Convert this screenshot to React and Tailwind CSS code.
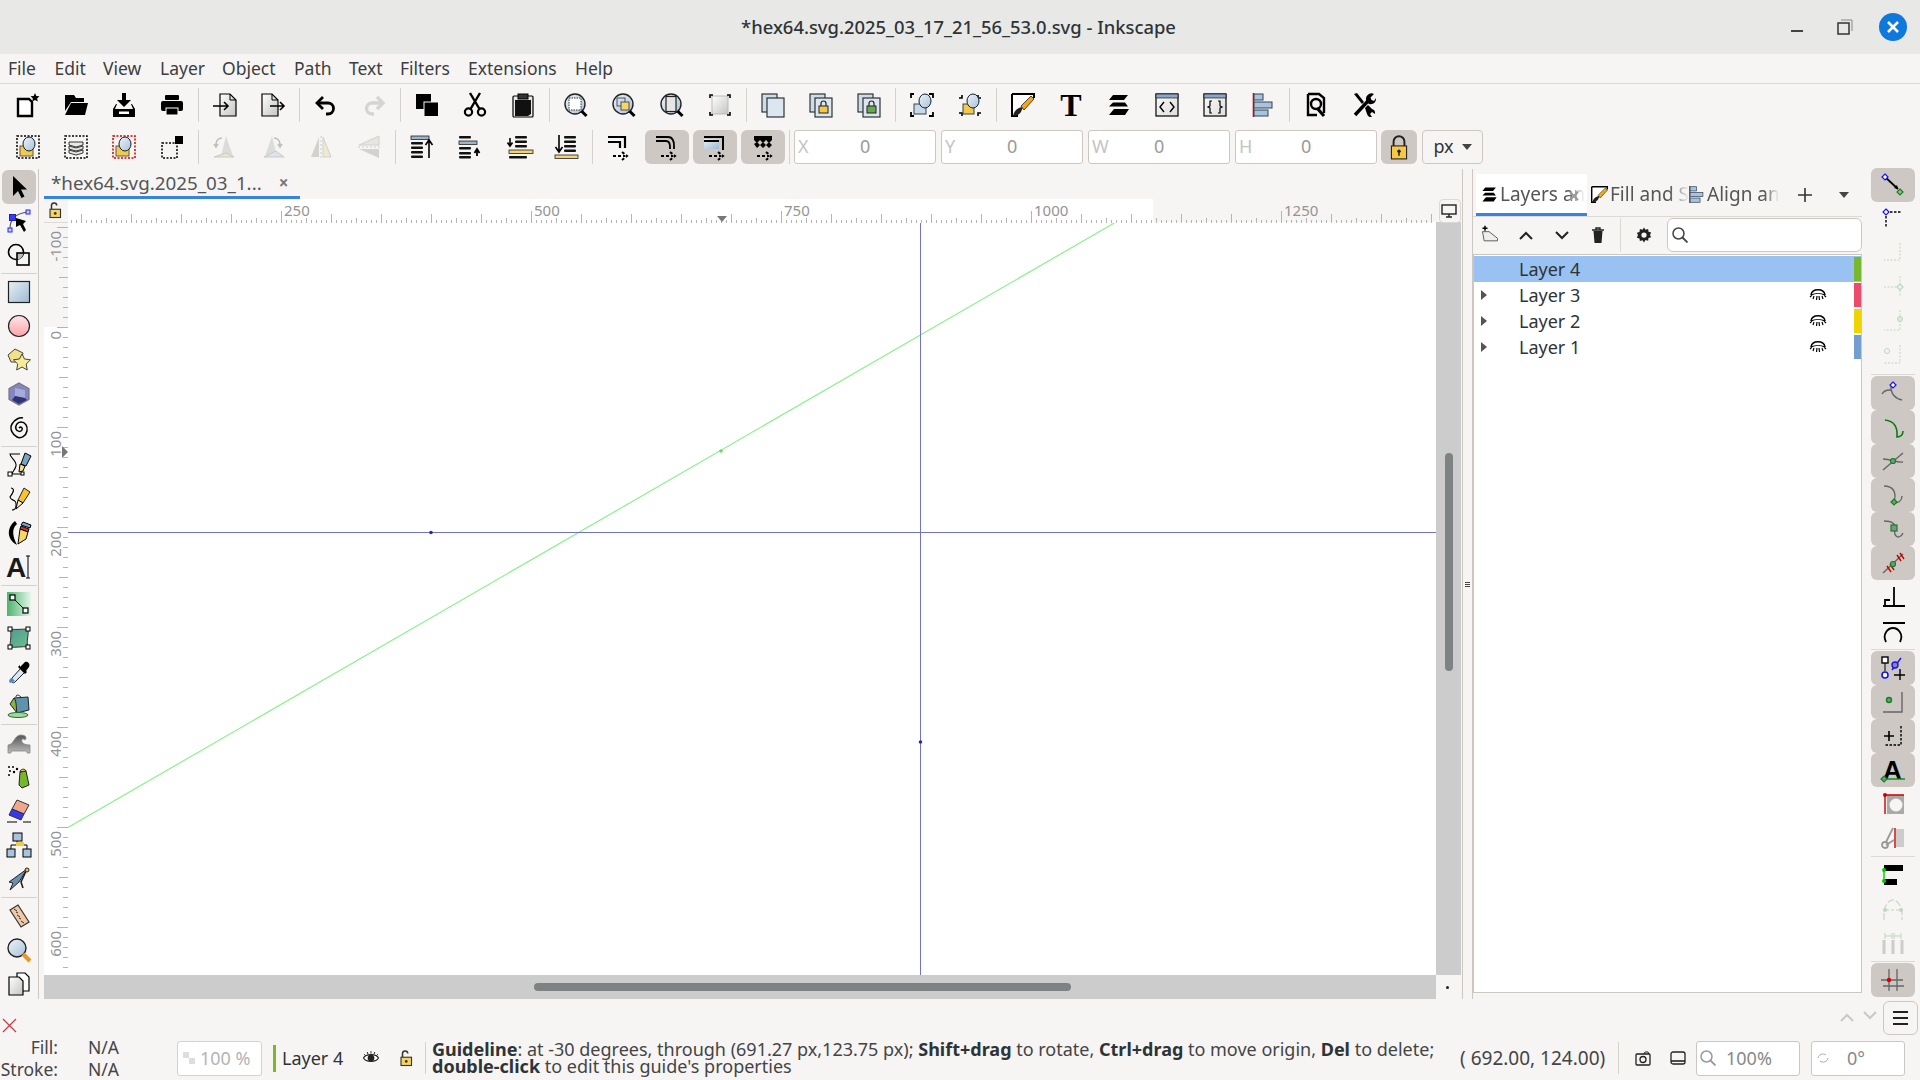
import React from "react";

const S = ({ children, size = 24 }) => (
  <svg width={size} height={size} viewBox="0 0 24 24" fill="none" className="shrink-0 overflow-visible">
    {children}
  </svg>
);

const k = "#000";
const Dash = (p) => <rect fill="none" stroke="#000" strokeWidth="1.5" strokeDasharray="2 1.5" {...p} />;
const Mag = ({ children, handle = "#000" }) => (
  <S>
    <circle cx="11" cy="11" r="10" fill="url(#gGlass)" stroke="#222" strokeWidth="1.4" />
    {children}
    <path d="M17.5 18l5 5" stroke={handle} strokeWidth="3" />
  </S>
);
const Glass = ({ x = 13, y = 10, r = 6 }) => <ellipse cx={x} cy={y} rx={r} ry={r + 1} fill="url(#gGlass)" stroke="#123" strokeWidth="1" />;
const Bars = ({ ys, x = 1, w = 15, blue, yellow }) => (
  <>
    {ys.map((y) => <rect key={y} x={x} y={y} width={w} height="2.6" rx="1" fill="#111" />)}
    {blue !== undefined && <rect x={x} y={blue} width={w + 6} height="3.4" fill="#9db4cc" stroke="#222" strokeWidth=".8" />}
    {yellow !== undefined && <rect x={x} y={yellow} width={w + 6} height="3.4" fill="#f3d27a" stroke="#222" strokeWidth=".8" />}
  </>
);

const New = () => <S><path d="M2 6h11l3 3v14H2z" fill="#fff" stroke={k} strokeWidth="2.4" /><path d="M19 0l1.300 3 3.200.3-2.400 2.100.7 3.200-2.800-1.700-2.800 1.700.7-3.200-2.400-2.100 3.200-.3z" fill={k} /></S>;
const Open = () => <S><path d="M1 2h9l2 3h8v4H7l-6 9z" fill={k} /><path d="M7 10h17l-3 12H1z" fill={k} /></S>;
const Save = () => <S><path d="M10 0h4v7h5l-7 7-7-7h5z" fill={k} /><path d="M4 11l-3 5v8h22v-8l-3-5h-1l2 5H3l2-5z" fill={k} /><rect x="7" y="18.500" width="10" height="2.500" fill="#fff" /></S>;
const Print = () => <S><rect x="5" y="2" width="14" height="5" rx="1" fill={k} /><rect x="1" y="8" width="22" height="10" rx="2" fill={k} /><rect x="6" y="15" width="12" height="7" fill={k} stroke="#fff" strokeWidth="1" /></S>;
const Import = () => <S><path d="M7 1h10l6 6v16H7z" fill="url(#gGray)" stroke={k} strokeWidth="1.200" /><path d="M17 1v6h6" stroke={k} /><path d="M0 13h15M11 9l4 4-4 4" stroke={k} strokeWidth="1.600" /></S>;
const Export = () => <S><path d="M1 1h10l6 6v16H1z" fill="url(#gGray)" stroke={k} strokeWidth="1.200" /><path d="M11 1v6h6" stroke={k} /><path d="M9 13h14M19 9l4 4-4 4" stroke={k} strokeWidth="1.600" /></S>;
const Undo = () => <S><path d="M9 4l-6 6 6 6" stroke={k} strokeWidth="2.800" /><path d="M3 10h11a5.500 5.500 0 0 1 0 11h-2" stroke={k} strokeWidth="2.800" /></S>;
const Redo = () => <S><path d="M15 4l6 6-6 6" stroke="#d4d4d2" strokeWidth="3.400" /><path d="M21 10H10a5.500 5.500 0 0 0 0 11h2" stroke="#d4d4d2" strokeWidth="3.400" /></S>;
const Copy = () => <S><rect x="1" y="1" width="15" height="15" fill={k} /><rect x="9" y="9" width="14.500" height="14.500" fill={k} stroke="#f6f5f4" strokeWidth="1" /></S>;
const Cut = () => <S><circle cx="5.500" cy="19" r="3.600" stroke={k} strokeWidth="2.200" /><circle cx="18.500" cy="19" r="3.600" stroke={k} strokeWidth="2.200" /><path d="M7.500 16L17 0M16.500 16L7 0" stroke={k} strokeWidth="2.400" /></S>;
const Paste = () => <S><rect x="2" y="3" width="20" height="21" rx="1" fill="#e8e8e6" stroke={k} strokeWidth="1.200" /><path d="M4 7h16v14l-3 2H4z" fill="#111" /><rect x="7" y="1" width="10" height="5" fill="#333" stroke={k} /></S>;
const ZoomSel = () => <Mag><rect x="5" y="5" width="12" height="12" fill="#fff" stroke="#333" strokeDasharray="1.500 1" /></Mag>;
const ZoomDraw = () => <Mag><rect x="5" y="5" width="8" height="8" fill="#cfdceb" stroke="#333" strokeWidth=".8" /><rect x="9" y="9" width="8" height="8" fill="#f5d46c" stroke="#333" strokeWidth=".8" /></Mag>;
const ZoomPage = () => <Mag><rect x="6" y="3.500" width="10" height="15" fill="#e6e6e4" stroke="#222" strokeWidth="1.200" /></Mag>;
const ZoomFit = () => <S><rect x="4" y="3" width="16" height="18" fill="url(#gGray)" stroke="#bbb" /><path d="M2 5V2h3M19 2h3v3M2 19v3h3M19 22h3v-3" stroke={k} strokeWidth="1.600" /></S>;
const Pages = ({ lock }) => <S><rect x="1" y="1" width="15" height="18" fill="#cfdbe8" stroke="#2e3436" strokeWidth="1.200" /><rect x="6" y="5" width="17" height="19" fill="#dce6f0" stroke="#2e3436" strokeWidth="1.200" />{lock && <><path d="M12 13v-2.500a2.500 2.500 0 0 1 5 0V13" stroke="#222" strokeWidth="1.200" /><rect x="10" y="13" width="9" height="7" fill={lock} stroke="#222" /></>}</S>;
const Group = () => <S><path d="M1 5V1h3M19 1h4v4M1 19v4h3M19 23h4v-4" stroke={k} strokeWidth="1.800" /><rect x="4" y="11" width="12" height="10" fill="#c9d8e8" stroke="#345" /><Glass x={15} y={8} r={6} /></S>;
const Ungroup = () => <S><path d="M1 5h3V2M20 2v3h3M1 20h3v3M20 23v-3h3" stroke={k} strokeWidth="1.600" /><rect x="5" y="11" width="11" height="10" fill="#f3c949" stroke="#345" /><Glass x={15} y={8} r={6} /></S>;
const FillIc = () => <S><FillInner /></S>;
const LayersIc = () => <S><LayersInner /></S>;
const Win = ({ children }) => <S><rect x="1" y="1" width="22" height="22" fill="url(#gGray2)" stroke={k} strokeWidth="1.200" /><rect x="1" y="1" width="22" height="4" fill="#88a6c6" stroke={k} strokeWidth=".6" />{children}</S>;
const Xml = () => <Win><path d="M9 9l-4 5 4 5M15 9l4 5-4 5" stroke={k} strokeWidth="1.400" /></Win>;
const Css = () => <Win><path d="M9 8H7v5l-2 1 2 1v5h2M15 8h2v5l2 1-2 1v5h-2" stroke={k} strokeWidth="1.200" /></Win>;
const AlignIc = () => <S><AlignInner /></S>;
const Prefs = () => <S><path d="M4 1h11l5 4v15" stroke={k} strokeWidth="2.400" /><path d="M4 1v21h9" stroke={k} strokeWidth="2.400" /><circle cx="12" cy="11" r="5" stroke={k} strokeWidth="2.400" /><path d="M13 15l7 8" stroke={k} strokeWidth="3.200" /></S>;
const Tools = () => <S><path d="M3 22L16 8" stroke={k} strokeWidth="3.400" /><path d="M15 9a5.500 5.500 0 0 1 7-8l-3.500 3.500 1 2.500 2.500 1L24 5a5.500 5.500 0 0 1-7 6z" fill={k} /><path d="M2 1l3-1 7 9-2 2z" fill={k} /><path d="M13 15l3-3 4 4a4.500 4.500 0 0 1 3 5l-3-2-2 2 2 3a4.500 4.500 0 0 1-5-3z" fill={k} /></S>;

const SelAll = () => <S><Dash x="1" y="1" width="22" height="22" /><rect x="4" y="11" width="13" height="10" fill="#f3c949" stroke="#654" /><Glass x={13} y={9} r={6} /></S>;
const SelLayers = () => <S><Dash x="1" y="1" width="22" height="22" /><path d="M5 7h14v3L12 12 5 10zM5 11l7 2 7-2v3l-7 2-7-2zM5 15l7 2 7-2v3l-7 2-7-2z" fill="#e8e8e6" stroke="#222" strokeWidth=".9" /></S>;
const Deselect = () => <S><Dash x="1" y="1" width="22" height="22" stroke="#d00000" /><rect x="4" y="11" width="13" height="10" fill="#f3c949" stroke="#654" /><Glass x={13} y={9} r={6} /></S>;
const SelSame = () => <S><Dash x="2" y="8" width="15" height="15" /><rect x="15" y="1" width="8" height="8" fill={k} /></S>;
const RotL = () => <S><path d="M13 1l7 20H8z" fill="#dcdcd8" /><path d="M1 22h20l-8-4z" fill="#eee6cc" stroke="#c9c9c6" /><path d="M9 3a6 6 0 0 0-6 6v3M1 9l2 3 2-3" stroke="#c0c0bd" strokeWidth="1.600" /></S>;
const RotR = () => <S><path d="M11 1L4 21h12z" fill="#dcdcd8" /><path d="M3 22h20l-8-6z" fill="#dde4ee" stroke="#c9c9c6" /><path d="M13 3a6 6 0 0 1 6 6v3M17 9l2 3 2-3" stroke="#c0c0bd" strokeWidth="1.600" /></S>;
const FlipH = () => <S><path d="M10 2v20H2z" fill="#d2d2ce" /><path d="M14 2v20h8z" fill="#f2ead0" stroke="#d0d0cc" /><path d="M12 1v22" stroke="#ccc" strokeDasharray="2 2" /></S>;
const FlipV = () => <S><path d="M22 1v9H2z" fill="#e5e5e2" stroke="#d0d0cc" /><path d="M22 23v-9H2z" fill="#d2d2ce" /><path d="M1 12h22" stroke="#ccc" strokeDasharray="2 2" /></S>;
const RaiseTop = () => <S><Bars ys={[7, 11.500, 16, 20.500]} w={12} blue={1} /><path d="M19 23V6M15.500 10L19 5l3.500 5" stroke={k} strokeWidth="1.600" /></S>;
const Raise = () => <S><Bars ys={[1, 12, 17, 21]} w={12} blue={6} /><path d="M19 21v-6M16.500 18l2.500-4 2.500 4" stroke={k} strokeWidth="1.800" /></S>;
const Lower = () => <S><Bars ys={[1, 5.500, 10]} x={9} w={12} /><Bars ys={[21]} x={3} w={18} yellow={15} /><path d="M4 3v7M1.500 7.500L4 11l2.500-3.500" stroke={k} strokeWidth="1.600" /></S>;
const LowerB = () => <S><Bars ys={[1, 5.500, 10, 14.500]} x={10} w={12} /><Bars ys={[]} x={1} w={17} yellow={20} /><path d="M5 0v16M1.500 12L5 17l3.500-5" stroke={k} strokeWidth="1.600" /></S>;
const DashArrow = () => <path d="M6 21h12M15 17l5 4-5 4" stroke={k} strokeWidth="2" strokeDasharray="3 2" />;
const TrStroke = () => <S><path d="M1 2h17v11M1 7h12v6" stroke={k} strokeWidth="2.200" /><DashArrow /></S>;
const TrCorner = () => <S><path d="M1 2h12c4 0 6 3 6 9v3M1 6h10c2 0 4 2 4 6v2" stroke={k} strokeWidth="1.800" /><DashArrow /></S>;
const TrGrad = () => <S><rect x="1" y="4" width="15" height="10" fill="url(#gBlue)" /><path d="M1 2h19v13M1 6h15" stroke={k} strokeWidth="2" /><DashArrow /></S>;
const TrPat = () => <S><path d="M3 1h18v4l-3 3-3-3-3 3-3-3-3 3-3-3zM3 9l3-2 3 3-3 3zM12 7l3 3-3 3-3-3zM18 7l3 3-3 3-3-3z" fill={k} /><DashArrow /></S>;

const Selector = () => <S><path d="M6 1v20l5-5 3.500 7 3-1.500-3.500-7h6z" fill={k} /></S>;
const Node = () => <S><path d="M3 20C3 10 8 5 20 3" stroke="#555" strokeWidth="1.200" /><rect x="2.500" y="5.500" width="6" height="6" fill="#3838ff" stroke="#2222aa" /><rect x="19" y="1" width="4" height="4" fill="#ccf" stroke="#22f" /><rect x="1" y="19" width="4" height="4" fill="#ccf" stroke="#22f" /><path d="M9 9l10 3-3 3 3 6-2 2-4-7-4 2z" fill={k} /></S>;
const Shape = () => <S><circle cx="9" cy="9" r="7.500" stroke={k} strokeWidth="1.600" /><path d="M10 10h6.500a7.500 7.500 0 0 1-6.500 6.500z" fill="#bbb" /><rect x="10" y="10" width="12" height="12" stroke={k} strokeWidth="1.600" /></S>;
const RectT = () => <S><rect x="1.500" y="1.500" width="21" height="21" fill="url(#gBlue)" stroke="#222" strokeWidth="1.200" /></S>;
const Ellipse = () => <S><circle cx="12" cy="12" r="10.500" fill="url(#gPink)" stroke="#222" strokeWidth="1.200" /></S>;
const Star = () => <S><path d="M8 1l8 4-2 9H4L1 7z" fill="#f0e28a" stroke="#444" /><path d="M15 6l2.500 5 6 .8-4.300 4.200 1 6L15 19l-5.300 3 1-6-4.300-4.200 6-.8z" fill="#f7eb9a" stroke="#444" /></S>;
const Box3d = () => <S><path d="M12 1l10 5.500v11L12 23 2 17.500v-11z" fill="#8286c2" stroke="#777" strokeWidth="1.200" /><path d="M8 6l10 2v8l-10-2z" fill="#a8abd8" /><path d="M8 14l10 2 2 2-8 4-7-4z" fill="#2f3478" /></S>;
const Spiral = () => <S><path d="M12 12c2-2 4 0 3 2s-5 2-6-1 1-7 5-7 7 4 6 9-6 8-10 6-8-8-5-13 8-7 11-6" stroke={k} strokeWidth="1.500" /></S>;
const Pen = () => <S><path d="M13 1H3c0 4 7 6 6 12-1 4-4 6-4 8h10" stroke={k} strokeWidth="1.100" /><rect x="1" y="19" width="4" height="4" fill="#fff" stroke={k} /><rect x="14" y="19" width="3" height="3" fill="#fff" stroke={k} /><path d="M18 0l6 3-5 10-5-2z" fill="#76a4c6" stroke={k} /><path d="M13 11l5 2-2 5-4 1z" fill="#f2e089" stroke={k} /></S>;
const Pencil = () => <S><path d="M4 1c5 1 1 6-1 9 1 5 7 1 6 9 0 4-4 4-4 4" stroke={k} strokeWidth="1.200" /><path d="M17 1l6 4-7 11-5-3z" fill="#f8c42c" stroke="#222" /><path d="M11 13l5 3-7 6z" fill="#f6f0c8" stroke={k} /></S>;
const Calli = () => <S><path d="M8 0C0 6-1 18 10 24 6 16 4 8 10 3z" fill={k} /><path d="M14 5l8 3-1 3-8-3z" fill="#c33" stroke={k} /><path d="M14 4l9 3 1-3-8-3z" fill="#76a4c6" stroke={k} /><path d="M13 8l8 3-2 7-8 5z" fill="#f6d860" stroke={k} /></S>;
const TextT = () => <S><text x="-1" y="22" fontFamily="'Liberation Sans',sans-serif" fontWeight="700" fontSize="28" fill="#1a1a1a">A</text><path d="M21 1v22M19 1h4M19 23h4" stroke={k} /></S>;
const Grad = () => <S><rect x="0" y="0" width="24" height="24" fill="url(#gGreen)" /><path d="M5 5l14 14" stroke={k} /><rect x="3" y="3" width="5" height="5" fill="#fff" stroke={k} strokeWidth="1.200" /><rect x="16" y="16" width="5" height="5" fill="#fff" stroke={k} strokeWidth="1.200" /></S>;
const Mesh = () => <S><path d="M3 3c6 1 12 0 18 0 1 6-2 12 0 18-6-1-12 1-18 0 0-6 2-12 0-18z" fill="url(#gTeal)" stroke="#333" /><rect x="1" y="1" width="4" height="4" fill="#fff" stroke={k} /><rect x="19" y="1" width="4" height="4" fill="#fff" stroke={k} /><rect x="1" y="19" width="4" height="4" fill="#fff" stroke={k} /><rect x="19" y="19" width="4" height="4" fill="#fff" stroke={k} /></S>;
const Dropper = () => <S><path d="M14 8l4 4L8 22c-2 2-5 0-3-4z" fill="#d7e7f4" stroke="#222" /><path d="M3 23c-2-2 0-5 2-5l3 3z" fill="#4a88c7" /><path d="M13 7l4-4c2-3 7 0 5 4l-3 4 1 1-2 2-7-7 2-2z" fill={k} /></S>;
const Bucket = () => <S><path d="M7 4l14-1 1 13-12 3z" fill="#5f93ad" stroke="#222" /><path d="M7 4c3 3 2 12 3 15L3 10z" fill="#8ab43c" stroke="#222" /><path d="M9 3c0-3 3-2 5 0" stroke="#222" /><ellipse cx="11" cy="21" rx="10" ry="2.500" fill="#a0d9a0" stroke="#2a6a2a" /></S>;
const Tweak = () => <S><path d="M1 22v-8c6 0 6-10 13-10 5 0 6 3 4 5-2-2-4-1-3 2 1 2 4 3 8 3v8h-3v-2H4v2z" fill="url(#gGrayD)" stroke="#888" strokeWidth=".8" /></S>;
const Spray = () => <S><path d="M13 7l6-1 3 14-7 3-3-3z" fill="#76b82a" stroke="#222" /><path d="M13 7c0-3 5-4 6-1z" fill="#f3c949" stroke="#222" /><g fill={k}><circle cx="2" cy="2" r="1" /><circle cx="6" cy="2" r="1" /><circle cx="10" cy="4" r="1.200" /><circle cx="3" cy="6" r="1" /><circle cx="7" cy="7" r="1.200" /><circle cx="2" cy="10" r="1" /></g></S>;
const Eraser = () => <S><path d="M10 1l12 5-5 9-12-5z" fill="#f0a88c" stroke="#333" /><path d="M5 10l12 5-3 6-12-5z" fill="#3636f0" stroke="#333" /><path d="M0 23h10M16 23h8" stroke={k} /></S>;
const Connector = () => <S><rect x="6" y="0" width="9" height="8" fill="#a9c3de" stroke={k} /><rect x="0" y="16" width="8" height="8" fill="#a9c3de" stroke={k} /><rect x="16" y="16" width="8" height="8" fill="#a9c3de" stroke={k} /><path d="M4 16v-4h16v4M10 8v4" stroke={k} /><rect x="9" y="9" width="8" height="4" fill="#f3c949" /></S>;
const Lpe = () => <S><path d="M20 2L2 15l4 1-3 7 9-8z" fill="#6f8faf" stroke="#222" strokeWidth="1" /><path d="M20 2l-6 13 2 6" stroke="#222" strokeWidth="1.600" /><circle cx="20" cy="3" r="2" fill="#e8c44a" stroke="#222" /></S>;
const Measure = () => <S><path d="M3 6l8-5 11 17-8 5z" fill="#f0c8a8" stroke="#333" strokeWidth="1.200" /><path d="M7 5l3 2M9 8l2 1M10 11l3 2M12 14l2 1M14 17l3 2" stroke="#333" /></S>;
const ZoomT = () => <S><circle cx="10" cy="10" r="9" fill="url(#gGlass)" stroke="#222" strokeWidth="1.400" /><path d="M16 16l7 7" stroke="#e8961e" strokeWidth="4" /></S>;
const PagesT = () => <S><path d="M10 1h8l4 4v14H10z" fill="#fff" stroke={k} strokeWidth="1.200" /><path d="M2 5h10l4 4v14H2z" fill="url(#gGray)" stroke={k} strokeWidth="1.200" /></S>;

const B = "#1414ee";
const Dm = ({ x, y, s = 3, fill = "#fff", stroke = B }) => <path d={`M${x} ${y - s}l${s} ${s}-${s} ${s}-${s}-${s}z`} fill={fill} stroke={stroke} strokeWidth="1.200" />;
const G = "#bcd8bc";
const Sn1 = () => <S><path d="M4 4l13 12" stroke={k} strokeWidth="1.800" /><path d="M17 16l-4-1 3-3z" fill={k} /><Dm x={4} y={4} /><Dm x={19} y={19} fill="#aab" stroke="#0a8a0a" /></S>;
const Sn2 = () => <S><path d="M5 5h16M5 5v16" stroke={k} strokeWidth="1.400" strokeDasharray="2.500 1.500" /><Dm x={5} y={5} /></S>;
const Sn3 = () => <S><path d="M19 2v17H3" stroke={G} strokeDasharray="2 1.500" /></S>;
const Sn4 = () => <S><path d="M19 1v20M3 12h16" stroke={G} strokeDasharray="2 1.500" /><Dm x={19} y={12} stroke={G} fill="#eef5ee" /></S>;
const Sn5 = () => <S><path d="M19 1v20H3" stroke={G} strokeDasharray="2 1.500" /><circle cx="19" cy="10" r="2.500" fill="#dceadc" stroke={G} /></S>;
const Sn6 = () => <S><path d="M19 2v18H3" stroke={G} strokeDasharray="2 1.500" /><circle cx="6" cy="8" r="2.500" stroke={G} /></S>;
const Gr = "#666";
const Sn7 = () => <S><path d="M1 13c3-5 7-4 9-4M10 4c-1 9 5 14 11 15" stroke={Gr} strokeWidth="1.400" /><Dm x={12} y={4} /></S>;
const Sn8 = () => <S><path d="M4 5c8 1 13 5 12 17 4 0 6-3 6-6" stroke="#0a7a0a" strokeWidth="1.600" /></S>;
const Sn9 = () => <S><path d="M2 21L22 4M2 10c8 0 14 4 20 3" stroke={Gr} strokeWidth="1.400" /><circle cx="12" cy="12" r="2.500" fill="#88a" stroke="#0a8a0a" strokeWidth="1.200" /></S>;
const Sn10 = () => <S><path d="M3 3c9 0 13 6 10 16M21 13c0 5-4 7-8 7" stroke={Gr} strokeWidth="1.400" /><Dm x={13} y={19} fill="#88a" stroke="#0a8a0a" /></S>;
const Sn11 = () => <S><path d="M3 4c8 0 12 3 11 8-1 4 0 7 3 8 2 0 4-2 5-4" stroke={Gr} strokeWidth="1.400" /><rect x="10" y="8" width="6" height="6" fill="#88a" stroke="#0a8a0a" strokeWidth="1.200" /></S>;
const Sn12 = () => <S><path d="M2 22L22 3" stroke={Gr} strokeWidth="1.400" /><path d="M6 15l4 6M9 13l4 6M16 4l4 6M19 2l4 6" stroke="#c00" strokeWidth="1.400" /><circle cx="12" cy="13" r="2.500" fill="#88a" stroke="#0a8a0a" strokeWidth="1.200" /></S>;
const Sn13 = () => <S><path d="M2 21h22M13 2v19M4 20v-5h5" stroke={k} strokeWidth="1.800" /></S>;
const Sn14 = () => <S><path d="M2 4h22M5 23c-4-8 2-14 7-14s11 6 7 14" stroke={k} strokeWidth="1.800" /></S>;
const Sn15 = () => <S><rect x="1" y="1" width="6" height="6" fill="#fff" stroke={k} strokeWidth="1.400" /><path d="M4 7v8" stroke={k} /><circle cx="4" cy="19" r="3" fill="#fff" stroke={B} strokeWidth="1.600" /><path d="M11 14L20 2" stroke={B} strokeWidth="1.400" /><circle cx="14" cy="9" r="3" fill="#88a" stroke={B} strokeWidth="1.400" /><path d="M19 13v11M13 19h11" stroke={k} strokeWidth="1.400" /></S>;
const Sn16 = () => <S><path d="M21 2v20H2" stroke={Gr} strokeWidth="1.400" /><circle cx="8" cy="10" r="2.500" fill="#88a" stroke="#0a8a0a" strokeWidth="1.400" /></S>;
const Sn17 = () => <S><path d="M3 12h10M8 7v10" stroke={k} strokeWidth="1.600" /><path d="M20 2v19H3" stroke={k} strokeWidth="1.400" strokeDasharray="2.500 1.500" /></S>;
const Sn18 = () => <S><text x="2" y="21" fontFamily="'Liberation Sans',sans-serif" fontWeight="700" fontSize="26" fill={k}>A</text><path d="M1 21h23" stroke="#0a8a0a" strokeWidth="1.400" /><Dm x={3} y={21} fill="#88a" stroke="#0a8a0a" /></S>;
const Sn19 = () => <S><rect x="6" y="3" width="17" height="19" fill="#aaa" /><circle cx="15" cy="13" r="6.500" fill="#f6f5f4" /><path d="M3 3h20M4 3v19" stroke="#c00" strokeWidth="1.400" /><circle cx="4" cy="3" r="2" fill="#c00" /></S>;
const Sn20 = () => <S><path d="M14 2v20" stroke="#c00" strokeWidth="1.400" /><rect x="15" y="3" width="8" height="18" fill="#ccc" /><circle cx="4" cy="19" r="3" stroke="#999" strokeWidth="1.800" /><path d="M5 16l7-14M5 19l8-5" stroke="#999" strokeWidth="1.800" /></S>;
const Sn21 = () => <S><rect x="3" y="2" width="19" height="6" fill={k} /><rect x="3" y="16" width="13" height="6" fill={k} /><path d="M3 7v11" stroke="#0c0" strokeWidth="1.400" /><circle cx="3" cy="7" r="2" fill="#0c0" /><circle cx="3" cy="18" r="2" fill="#0c0" /></S>;
const Sn22 = () => <S><path d="M3 23C2 8 8 3 12 3s10 5 9 20" stroke="#d4d4d0" strokeWidth="1.400" strokeDasharray="7 2" /><path d="M5 13h14" stroke={G} strokeDasharray="3 2" /><circle cx="4" cy="13" r="2" fill={G} /><circle cx="20" cy="13" r="2" fill={G} /></S>;
const Sn23 = () => <S><path d="M3 9v14M12 9v14M21 9v14" stroke="#ccc" strokeWidth="3" /><path d="M4 5h7M13 5h7M4 2v6M11 2v6M13 2v6M20 2v6" stroke={G} /></S>;
const Sn24 = () => <S><path d="M8 1v22M16 1v22M0 12h22M2 18h21" stroke={Gr} strokeWidth="1.300" /><circle cx="8" cy="12" r="2.200" fill="#d00" /></S>;

const EyeShut = () => <S><path d="M2 11C3 4 15 4 16 11" stroke={k} strokeWidth="1.500" transform="translate(3 1)" /><path d="M2 11c4-2 10-2 14 0M1 13l2-2M4 15l1-3M7.500 16l.5-4M10.500 16l-.5-4M14 15l-1-3M17 13l-2-2" stroke={k} strokeWidth="1.200" transform="translate(3 1)" /></S>;
const Tri = () => <svg width="8" height="12" viewBox="0 0 8 12"><path d="M1 1l6 5-6 5z" fill="#555" /></svg>;
const Lock = ({ open }) => (
  <S size={18}>
    <path d={open ? "M6 11V6a3.500 3.500 0 0 1 7 0" : "M7 11V6a5 5 0 0 1 10 0v5"} stroke="#333" strokeWidth="2" />
    <rect x="4" y="11" width="14" height="11" fill="#f3d465" stroke="#333" strokeWidth="1.500" />
    <circle cx="11" cy="16.500" r="1.800" fill="#333" />
  </S>
);

function LayersInner() {
  return <path d="M6 2h15l-4 5H2zM6 9.500h12l3 4H2zM7 16h15l-4 6H2z" fill="#000" />;
}
function FillInner() {
  return <><path d="M1 1h21L1 23z" fill="#fff" /><path d="M1 1h22v4M1 1v22h6" stroke="#000" strokeWidth="2" /><path d="M2 23c1-6 6-9 10-9l-2 5c-2 3-5 4-8 4z" fill="#222" /><path d="M10 13L20 3l3 3-10 11z" fill="#f0a818" stroke="#222" strokeWidth=".8" /></>;
}
function AlignInner() {
  return <><path d="M2.500 0v24" stroke="#d00" strokeWidth="1.600" /><rect x="3" y="1" width="9" height="6" fill="#a9c3de" stroke="#345" /><rect x="3" y="9" width="18" height="6" fill="#a9c3de" stroke="#345" /><rect x="3" y="17" width="14" height="6" fill="#a9c3de" stroke="#345" /></>;
}

const row1 = [[New, Open, Save, Print], [Import, Export], [Undo, Redo], [Copy, Cut, Paste], [ZoomSel, ZoomDraw, ZoomPage, ZoomFit],
  [() => <Pages />, () => <Pages lock="#f3c949" />, () => <Pages lock="#6aa84f" />], [Group, Ungroup], [FillIc, () => <S><text x="12" y="23" textAnchor="middle" fontFamily="'Liberation Serif',serif" fontWeight="700" fontSize="32" fill={k}>T</text></S>, LayersIc, Xml, Css, AlignIc], [Prefs, Tools]];
const row2 = [[SelAll, SelLayers, Deselect, SelSame], [RotL, RotR, FlipH, FlipV], [RaiseTop, Raise, Lower, LowerB]];
const row2b = [[TrStroke, false], [TrCorner, true], [TrGrad, true], [TrPat, true]];
const leftTools = [[Selector, Node, Shape], [RectT, Ellipse, Star, Box3d, Spiral], [Pen, Pencil, Calli, TextT], [Grad, Mesh, Dropper, Bucket], [Tweak, Spray, Eraser, Connector, Lpe], [Measure, ZoomT, PagesT]];
const snaps = [
  [[Sn1, 1], [Sn2, 0], [Sn3, 0], [Sn4, 0], [Sn5, 0], [Sn6, 0]],
  [[Sn7, 1], [Sn8, 1], [Sn9, 1], [Sn10, 1], [Sn11, 1], [Sn12, 1], [Sn13, 0], [Sn14, 0]],
  [[Sn15, 1], [Sn16, 1], [Sn17, 1], [Sn18, 1], [Sn19, 0], [Sn20, 0]],
  [[Sn21, 0], [Sn22, 0], [Sn23, 0]],
  [[Sn24, 1]],
];
const menus = [["File", "w-[46.5px]"], ["Edit", "w-[48.5px]"], ["View", "w-[57px]"], ["Layer", "w-[62px]"], ["Object", "w-[72px]"], ["Path", "w-[55px]"], ["Text", "w-[51px]"], ["Filters", "w-[68px]"], ["Extensions", "w-[107px]"], ["Help", "w-[50px]"]];
const layers = [["Layer 4", "bg-[#77b82f]", true], ["Layer 3", "bg-[#ee4a6b]"], ["Layer 2", "bg-[#eed400]"], ["Layer 1", "bg-[#729fcf]"]];

const Field = ({ label }) => (
  <div className="w-[142px] h-[34px] bg-white border border-[#cdc7c2] rounded-[3px] flex items-center pl-[3px] text-[18px] shrink-0">
    <span className="w-[62px] text-[#c4c4c2]">{label}</span>
    <span className="text-[#999a98]">0</span>
  </div>
);

const Vsep = () => <div className="w-px h-[34px] bg-[#d5d1cd] mx-[2px] shrink-0" />;

const Toolbar = ({ groups }) =>
  groups.map((g, i) => (
    <React.Fragment key={i}>
      {i > 0 && <Vsep />}
      {g.map((Icon, j) => (
        <div key={j} className="w-[48px] h-[34px] flex items-center justify-center shrink-0">
          <Icon />
        </div>
      ))}
    </React.Fragment>
  ));

const topTicks = [];
for (let v = -35; v <= 1405; v += 5) topTicks.push(v);
const leftTicks = [];
for (let v = -100; v <= 650; v += 10) leftTicks.push(v);

const TopRuler = () => (
  <svg width="1368" height="24" className="block">
    <rect width="1085" height="24" fill="#fff" />
    {topTicks.map((v) => {
      const x = v + 31 - 68 + 0.5;
      const len = v % 250 === 0 ? 12 : v % 50 === 0 ? 9 : v % 25 === 0 ? 5 : 3;
      return <path key={v} d={`M${x} ${24 - len}V24`} stroke="#b4b4b2" />;
    })}
    {[250, 500, 750, 1000, 1250].map((v) => (
      <text key={v} x={v + 31 - 68 + 3} y="17" fontSize="15" fill="#949492" fontFamily="'Noto Sans',sans-serif">{v}</text>
    ))}
    <path d="M649 17h10l-5 6z" fill="#777" />
  </svg>
);

const LeftRuler = () => (
  <svg width="24" height="753" className="block">
    <rect y="105" width="24" height="648" fill="#fff" />
    {leftTicks.map((v) => {
      const y = v + 105 + 0.5;
      const len = v % 100 === 0 ? 11 : v % 50 === 0 ? 9 : 5;
      return <path key={v} d={`M${24 - len} ${y}H24`} stroke="#b4b4b2" />;
    })}
    {[-100, 0, 100, 200, 300, 400, 500, 600].map((v) => (
      <text key={v} transform={`translate(17 ${v + 105 + 4}) rotate(-90)`} textAnchor="end" fontSize="15" fill="#949492" fontFamily="'Noto Sans',sans-serif">{v}</text>
    ))}
    <path d="M18 224v12l6-6z" fill="#777" />
  </svg>
);

const Canvas = () => (
  <svg width="1368" height="753" className="block bg-white">
    <path d="M0 605.500L1048 0" stroke="#8cf08c" strokeWidth="1.200" />
    <path d="M0 310.500H1368" stroke="#7272c8" strokeWidth="1" />
    <path d="M852.500 0V753" stroke="#7272c8" strokeWidth="1" />
    <circle cx="653" cy="229" r="1.800" fill="#6fd86f" />
    <circle cx="363" cy="310.500" r="1.800" fill="#2a2aa8" />
    <circle cx="852.500" cy="520" r="1.800" fill="#2a2aa8" />
  </svg>
);

export default function App() {
  return (
    <div className="w-[1920px] h-[1080px] flex flex-col overflow-hidden bg-[#f6f5f4] text-[#2e3436] text-[17px] font-['Noto_Sans',sans-serif]">
      <svg width="0" height="0" className="absolute">
        <defs>
          <linearGradient id="gGlass" x1="0" y1="0" x2="1" y2="1"><stop offset="0" stopColor="#eef3f8" /><stop offset="1" stopColor="#a9c1d8" /></linearGradient>
          <linearGradient id="gGray" x1="0" y1="0" x2="1" y2="1"><stop offset="0" stopColor="#fff" /><stop offset="1" stopColor="#c4c4c2" /></linearGradient>
          <linearGradient id="gGray2" x1="0" y1="0" x2="1" y2="1"><stop offset="0" stopColor="#fafafa" /><stop offset="1" stopColor="#dddddb" /></linearGradient>
          <linearGradient id="gGrayD" x1="0" y1="0" x2="0" y2="1"><stop offset="0" stopColor="#555" /><stop offset="1" stopColor="#bbb" /></linearGradient>
          <linearGradient id="gBlue" x1="0" y1="0" x2="1" y2="1"><stop offset="0" stopColor="#e8f0f6" /><stop offset="1" stopColor="#9cbad2" /></linearGradient>
          <linearGradient id="gPink" x1="0" y1="0" x2="0" y2="1"><stop offset="0" stopColor="#ffe4e6" /><stop offset="1" stopColor="#fba3ab" /></linearGradient>
          <linearGradient id="gGreen" x1="0" y1="0" x2="1" y2="0"><stop offset="0" stopColor="#4cb36c" /><stop offset="1" stopColor="#e6f5ea" /></linearGradient>
          <linearGradient id="gTeal" x1="0" y1="0" x2="1" y2="1"><stop offset="0" stopColor="#4c9a8f" /><stop offset="1" stopColor="#6fbf90" /></linearGradient>
        </defs>
      </svg>

      {/* title bar */}
      <div className="h-[54px] shrink-0 bg-[#e8e8e7] flex items-center">
        <div className="flex-1" />
        <div className="font-medium text-[18.400px] text-[#2e3436] whitespace-nowrap">*hex64.svg.2025_03_17_21_56_53.0.svg - Inkscape</div>
        <div className="flex-1 flex justify-end pr-[3px]">
          <div className="w-[48px] h-[40px] flex items-center justify-center">
            <div className="w-3 h-[2px] mt-[8px] bg-[#444]" />
          </div>
          <div className="w-[48px] h-[40px] flex items-center justify-center">
            <svg width="16" height="16" viewBox="0 0 16 16"><path d="M4 1h11v11" stroke="#888" fill="none" /><rect x="1" y="4" width="11" height="11" stroke="#333" strokeWidth="1.500" fill="none" /></svg>
          </div>
          <div className="w-[48px] h-[40px] flex items-center justify-center">
            <div className="w-7 h-7 rounded-full bg-[#0e78dc] flex items-center justify-center">
              <svg width="14" height="14" viewBox="0 0 14 14"><path d="M2 2l10 10M12 2L2 12" stroke="#fff" strokeWidth="2.600" /></svg>
            </div>
          </div>
        </div>
      </div>

      {/* menu */}
      <div className="h-[30px] shrink-0 flex items-center pl-[8px] border-b border-[#dcd8d4] text-[17.500px] text-[#3d3d3d]">
        {menus.map(([m, w]) => <div key={m} className={w}>{m}</div>)}
      </div>

      {/* toolbars */}
      <div className="h-[42px] shrink-0 flex items-center pl-[4px]">
        <Toolbar groups={row1} />
      </div>
      <div className="h-[43px] shrink-0 flex items-center pl-[4px] pb-[2px]">
        <Toolbar groups={row2} />
        <Vsep />
        {row2b.map(([Icon, on], i) => (
          <div key={i} className={`w-[44px] h-[34px] mx-[2px] rounded-[6px] flex items-center justify-center shrink-0 ${on ? "bg-[#cdc8c3]" : ""}`}>
            <Icon />
          </div>
        ))}
        <Vsep />
        <div className="flex gap-[5px] ml-[2px]">
          <Field label="X" />
          <Field label="Y" />
          <Field label="W" />
          <Field label="H" />
        </div>
        <div className="w-[36px] h-[34px] ml-[4px] rounded-[6px] bg-[#cdc8c3] flex items-center justify-center shrink-0">
          <S size={26}><path d="M7 11V7a5 5 0 0 1 10 0v4" stroke="#222" strokeWidth="1.800" /><rect x="5" y="11" width="14" height="12" fill="#f6c944" stroke="#222" /><circle cx="12" cy="16" r="1.600" fill="#222" /><path d="M12 17v3" stroke="#222" strokeWidth="1.400" /></S>
        </div>
        <div className="w-[61px] h-[34px] ml-[5px] border border-[#cdc7c2] rounded-[4px] flex items-center justify-center gap-2 text-[18px] shrink-0">
          <span>px</span>
          <svg width="10" height="6" viewBox="0 0 10 6"><path d="M0 0h10L5 6z" fill="#444" /></svg>
        </div>
      </div>

      {/* main */}
      <div className="h-[830px] shrink-0 flex">
        {/* tool column */}
        <div className="w-[39px] shrink-0 border-r border-[#cdc7c2] pt-px pl-[1px]">
          {leftTools.map((g, i) => (
            <React.Fragment key={i}>
              {i > 0 && <div className="h-[3px] flex items-center"><div className="w-[36px] h-px bg-[#d5d1cd]" /></div>}
              {g.map((Icon, j) => (
                <div key={j} className={`w-[34px] h-[34px] ml-[1px] rounded-[6px] flex items-center justify-center ${i === 0 && j === 0 ? "bg-[#cdc8c3]" : ""}`}>
                  <Icon />
                </div>
              ))}
            </React.Fragment>
          ))}
        </div>

        {/* canvas column */}
        <div className="w-[1417px] ml-[5px] shrink-0 pt-px flex flex-col">
          <div className="h-[29px] shrink-0 flex">
            <div className="w-[256px] h-[29px] border-b-[3px] border-[#3584e4] flex items-center pl-[7px] text-[18.800px] text-[#555]">
              <span className="whitespace-nowrap">*hex64.svg.2025_03_1...</span>
              <span className="ml-[17px] text-[17px] font-bold text-[#777]">×</span>
            </div>
          </div>
          <div className="h-[24px] -mb-px shrink-0 flex relative">
            <div className="w-[24px] h-[24px] shrink-0 flex items-center justify-center bg-[#f6f5f4] pb-[2px] border-b border-[#dcd8d4]"><Lock open /></div>
            <TopRuler />
            <div className="w-[25px] h-[24px] shrink-0 flex items-center justify-end">
              <div className="w-[22px] h-[24px] pr-[3px] rounded-[4px] border border-[#dcd8d4] flex items-center justify-center">
                <svg width="16" height="14" viewBox="0 0 16 14" className="shrink-0"><rect x="1" y="1" width="14" height="9" fill="none" stroke="#222" strokeWidth="1.400" /><path d="M5 13h6M8 10v3" stroke="#222" strokeWidth="1.400" /></svg>
              </div>
            </div>
          </div>
          <div className="h-[753px] shrink-0 flex">
            <LeftRuler />
            <Canvas />
            <div className="w-[25px] bg-[#cccccc] flex justify-center pt-[231px]">
              <div className="w-[8px] h-[218px] rounded-full bg-[#7e8282]" />
            </div>
          </div>
          <div className="h-[24px] shrink-0 flex">
            <div className="w-[1392px] bg-[#cccccc] pl-[490px] pt-[8px]">
              <div className="w-[537px] h-[8px] rounded-full bg-[#7e8282]" />
            </div>
            <div className="w-[25px] flex items-center justify-center"><div className="w-[3px] h-[3px] rounded-full bg-[#222] -ml-[3px]" /></div>
          </div>
        </div>

        {/* dock handle */}
        <div className="w-[11px] shrink-0 border-x border-[#cdc7c2] ml-px flex items-center justify-center">
          <div className="flex flex-col gap-px -ml-px">
            <div className="w-[5px] h-px bg-[#444]" />
            <div className="w-[5px] h-px bg-[#444]" />
            <div className="w-[5px] h-px bg-[#444]" />
          </div>
        </div>

        {/* dialogs panel */}
        <div className="w-[389px] shrink-0 flex flex-col pb-[6px]">
          <div className="h-[48px] shrink-0 pt-[5px] flex items-stretch border-b border-[#dcd8d4] text-[19px]">
            <div className="w-[111px] ml-[3px] pt-[2px] bg-white border-b-[3px] border-[#3584e4] flex items-center pl-[5px] gap-[2px] relative">
              <S size={17}><LayersInner /></S>
              <span className="whitespace-nowrap w-[85px] text-[#555] [mask-image:linear-gradient(to_right,black_80%,transparent)]">Layers an</span>
              <svg width="12" height="12" viewBox="0 0 12 12" className="absolute right-[7px] top-[16px]"><path d="M2 2l8 8M10 2l-8 8" stroke="#999" strokeWidth="2" /></svg>
            </div>
            <div className="w-[97px] ml-[4px] pt-[2px] pb-[3px] flex items-center gap-[2px]">
              <S size={17}><FillInner /></S>
              <span className="whitespace-nowrap w-[80px] text-[#555] [mask-image:linear-gradient(to_right,black_75%,transparent)]">Fill and S</span>
            </div>
            <div className="w-[97px] pt-[2px] pb-[3px] flex items-center gap-[2px]">
              <S size={17}><AlignInner /></S>
              <span className="whitespace-nowrap w-[72px] text-[#555] [mask-image:linear-gradient(to_right,black_80%,transparent)]">Align an</span>
            </div>
            <div className="w-[39px] flex items-center justify-center">
              <svg width="16" height="16" viewBox="0 0 16 16"><path d="M8 1v14M1 8h14" stroke="#333" strokeWidth="1.600" /></svg>
            </div>
            <div className="flex-1 flex items-center pl-[15px]">
              <svg width="10" height="6" viewBox="0 0 10 6"><path d="M0 0h10L5 6z" fill="#444" /></svg>
            </div>
          </div>
          <div className="h-[36px] shrink-0 flex items-center">
            <div className="w-[35px] flex justify-center"><S size={20}><path d="M3 8h8L21 16v3H5z" fill="#eee" stroke="#444" /><path d="M3 4h6M6 1v6" stroke={k} strokeWidth="1.800" /></S></div>
            <div className="w-[36px] flex justify-center"><svg width="14" height="9" viewBox="0 0 14 9"><path d="M1 8l6-6 6 6" stroke="#222" strokeWidth="2" fill="none" /></svg></div>
            <div className="w-[36px] flex justify-center"><svg width="14" height="9" viewBox="0 0 14 9"><path d="M1 1l6 6 6-6" stroke="#222" strokeWidth="2" fill="none" /></svg></div>
            <div className="w-[36px] flex justify-center"><svg width="14" height="16" viewBox="0 0 14 16"><path d="M1 3h12M5 3V1h4v2" stroke="#222" strokeWidth="1.400" fill="none" /><path d="M2.500 4h9l-1 12h-7z" fill="#222" /></svg></div>
            <div className="w-px h-[34px] ml-[4px] bg-[#dcd8d4]" />
            <div className="w-[46px] flex justify-center"><S size={18}><path d="M12 2l2 3 3.500-1 .5 3.500 3.500 1-1.500 3.500 1.500 3-3.500 1-.5 3.500-3.500-1L12 22l-2-3-3.500 1-.5-3.500-3.500-1 1.500-3.500-1.500-3 3.500-1L6.500 4 10 5z" fill="#222" /><circle cx="12" cy="12" r="3.500" fill="#f6f5f4" /></S></div>
            <div className="w-[196px] h-[34px] bg-white border border-[#cdc7c2] rounded-[6px] flex items-center pl-[4px]">
              <svg width="16" height="16" viewBox="0 0 16 16"><circle cx="6.500" cy="6.500" r="5.500" stroke="#444" strokeWidth="1.500" fill="none" /><path d="M10.500 10.500l5 5" stroke="#444" strokeWidth="1.800" /></svg>
            </div>
          </div>
          <div className="flex-1 bg-white border border-[#cdc7c2] mt-px pt-px">
            {layers.map(([name, colour, active]) => (
              <div key={name} className={`h-[26px] flex items-center ${active ? "bg-[#99c1f1]" : ""}`}>
                <div className="w-[45px] pl-[6px] flex items-center shrink-0">{!active && <Tri />}</div>
                <span className="text-[18px] text-[#2e3436] flex-1">{name}</span>
                <div className="w-[24px] mr-[24px] flex justify-center">{!active && <EyeShut />}</div>
                <div className={`w-[7px] h-[24px] shrink-0 ${colour}`} />
              </div>
            ))}
          </div>
        </div>

        {/* snap bar */}
        <div className="w-[44px] ml-[9px] -mt-px shrink-0">
          {snaps.map((g, i) => (
            <React.Fragment key={i}>
              {i > 0 && <div className={`${i === 1 ? "h-[4px]" : "h-[3px]"} flex items-center`}><div className="w-full h-px bg-[#dcd8d4]" /></div>}
              {g.map(([Icon, on], j) => (
                <div key={j} className={`h-[34px] rounded-[6px] flex items-center justify-center ${on ? "bg-[#cdc8c3]" : ""}`}>
                  <Icon />
                </div>
              ))}
            </React.Fragment>
          ))}
        </div>
      </div>

      {/* status */}
      <div className="flex-1 flex flex-col border-b border-[#333]">
        <div className="h-[37px] shrink-0 flex items-center pl-[2px]">
          <svg width="15" height="15" viewBox="0 0 15 15" className="mt-[16px]"><path d="M1 1l13 13M14 1L1 14" stroke="#d03545" strokeWidth="1.200" /></svg>
          <div className="flex-1" />
          <svg width="14" height="9" viewBox="0 0 14 9"><path d="M1 8l6-6 6 6" stroke="#c8c8c6" strokeWidth="2" fill="none" /></svg>
          <svg width="14" height="9" viewBox="0 0 14 9" className="ml-[9px] -mt-[4px]"><path d="M1 1l6 6 6-6" stroke="#c8c8c6" strokeWidth="2" fill="none" /></svg>
          <div className="w-[35px] h-[34px] ml-[6px] mr-[2px] border border-[#cdc7c2] rounded-[6px] flex flex-col items-center justify-center gap-[4px]">
            <div className="w-[15px] h-[2px] bg-[#222]" />
            <div className="w-[15px] h-[2px] bg-[#222]" />
            <div className="w-[15px] h-[2px] bg-[#222]" />
          </div>
        </div>
        <div className="flex-1 flex items-center">
          <div className="w-[177px] shrink-0 grid grid-cols-[58px_1fr] leading-[22px] text-[17.500px] text-[#444]">
            <span className="text-right">Fill:</span><span className="pl-[30px]">N/A</span>
            <span className="text-right">Stroke:</span><span className="pl-[30px]">N/A</span>
          </div>
          <div className="w-[85px] h-[35px] shrink-0 bg-white border border-[#d5d1cd] rounded-[3px] flex items-center pl-[5px] gap-[2px] text-[#b4b4b2] text-[18px]">
            <svg width="12" height="12" viewBox="0 0 12 12"><rect width="12" height="12" fill="#ddd" /><rect x="6" y="0" width="6" height="6" fill="#fff" /><rect x="0" y="6" width="6" height="6" fill="#fff" /></svg>
            <span className="ml-[3px]">100 %</span>
          </div>
          <div className="w-[3px] h-[27px] ml-[11px] bg-[#77b82f] shrink-0" />
          <span className="ml-[6px] w-[60px] shrink-0 text-[18px] whitespace-nowrap">Layer 4</span>
          <div className="w-[58px] flex justify-center shrink-0">
            <S size={18}><path d="M2 12C5 6 19 6 22 12 19 18 5 18 2 12z" fill="#fff" stroke="#222" strokeWidth="1.500" /><circle cx="12" cy="12" r="4.500" fill="#222" /><path d="M3 7l2 2M7 4l1 3M12 3v3M17 4l-1 3M21 7l-2 2" stroke="#222" strokeWidth="1.300" /></S>
          </div>
          <div className="w-[14px] flex justify-center shrink-0"><Lock open /></div>
          <div className="w-px h-[32px] ml-[11px] bg-[#d5d1cd] shrink-0" />
          <div className="w-[1028px] ml-[6px] shrink-0 leading-[17px] text-[18px] whitespace-nowrap text-[#444]">
            <b className="text-[#2e3436]">Guideline</b>: at -30 degrees, through (691.27 px,123.75 px); <b className="text-[#2e3436]">Shift+drag</b> to rotate, <b className="text-[#2e3436]">Ctrl+drag</b> to move origin, <b className="text-[#2e3436]">Del</b> to delete;<br />
            <b className="text-[#2e3436]">double-click</b> to edit this guide's properties
          </div>
          <div className="w-[158px] shrink-0 text-[19px] whitespace-nowrap text-[#444]">( 692.00,  124.00)</div>
          <div className="w-px h-[32px] bg-[#d5d1cd] shrink-0" />
          <div className="w-[32px] flex justify-end shrink-0">
            <svg width="16" height="15" viewBox="0 0 16 15"><rect x="1" y="3" width="14" height="11" rx="1" stroke="#222" strokeWidth="1.300" fill="none" /><circle cx="8" cy="8.500" r="3" stroke="#222" strokeWidth="1.300" fill="none" /><path d="M9 3l1-2h3l1 2" stroke="#222" fill="none" /></svg>
          </div>
          <div className="w-[35px] flex justify-end shrink-0">
            <svg width="16" height="14" viewBox="0 0 16 14"><rect x="1" y="1" width="14" height="12" rx="2" stroke="#222" strokeWidth="1.300" fill="none" /><path d="M1 10h14" stroke="#222" strokeWidth="1.600" /></svg>
          </div>
          <div className="w-[104px] h-[35px] ml-[10px] shrink-0 bg-white border border-[#cdc7c2] rounded-[3px] flex items-center pl-[3px] text-[18px] text-[#888]">
            <svg width="16" height="16" viewBox="0 0 16 16"><circle cx="6.500" cy="6.500" r="5.500" stroke="#999" strokeWidth="1.500" fill="none" /><path d="M10.500 10.500l5 5" stroke="#999" strokeWidth="1.800" /></svg>
            <span className="ml-[10px]">100%</span>
          </div>
          <div className="w-[94px] h-[35px] ml-[11px] shrink-0 bg-white border border-[#cdc7c2] rounded-[3px] flex items-center pl-[4px] text-[18px] text-[#888]">
            <svg width="14" height="14" viewBox="0 0 14 14"><path d="M2 7a5 5 0 0 1 8-3M12 7a5 5 0 0 1-8 3" stroke="#aaa" fill="none" /></svg>
            <span className="ml-[17px]">0°</span>
          </div>
        </div>
      </div>
    </div>
  );
}
